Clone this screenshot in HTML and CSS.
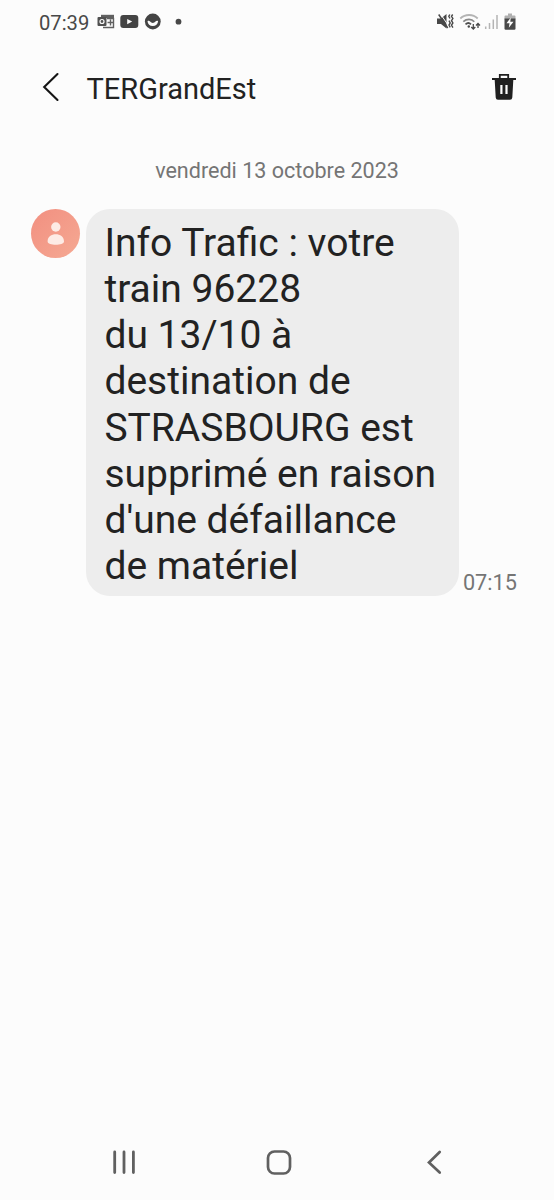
FILE: index.html
```
<!DOCTYPE html>
<html lang="fr">
<head>
    <meta charset="UTF-8">
    <meta name="viewport" content="width=device-width, initial-scale=1.0">
    <title>TERGrandEst</title>
    <link rel="stylesheet" href="styles.css">
</head>
<body>
    <div class="status-bar">
        <span class="clock">07:39</span>
        <svg class="status-left" width="86" height="20" viewBox="97 12 86 20">
            <path fill="#606060" d="M101 14.800h13v3.200h-13z"/>
            <path fill="none" stroke="#606060" stroke-width="1.400" d="M107 18.500h6.500v9H103M110.500 19.500v6M107.500 22.500h6"/>
            <rect x="97.500" y="17" width="9" height="9" rx="1" fill="#505050"/>
            <circle cx="102" cy="21.500" r="2" fill="none" stroke="#fcfcfc" stroke-width="1.200"/>
            <rect x="120.300" y="15" width="18" height="13" rx="3" fill="#444"/>
            <path fill="#fcfcfc" d="M127.200 18.900v5.400l5-2.700z"/>
            <circle cx="152.800" cy="21.500" r="7.900" fill="#444"/>
            <path fill="#fcfcfc" d="M147.500 21.200c.8-.8 2-.5 2.600.4c1.300 1.700 4.100 1.700 5.400 0c.6-.9 1.800-1.200 2.600-.4c-.3 3-2.300 4.900-5.300 4.900s-5-1.900-5.300-4.900z"/>
            <circle cx="178.500" cy="21.700" r="2.900" fill="#484848"/>
        </svg>
        <svg class="status-right" width="82" height="20" viewBox="436 12 82 20">
            <path fill="#484848" d="M437 18.500h4l5.500-4.500v14.500l-5.500-4.500h-4z"/>
            <path stroke="#fcfcfc" stroke-width="1" d="M440.500 14l8.500 12.500"/>
            <path stroke="#484848" stroke-width="1.500" d="M438.700 14.500l9 13.500"/>
            <path fill="none" stroke="#484848" stroke-width="1.400" d="M449.800 14.500l-1 1.800l1.200 2.200M452.700 14.500l-1.200 1.800l1.400 2.200l-1.400 2.200l1.400 2.200l-1.400 2.200l1.400 2.500M449 20.700l1.200 2.200l-1.200 2.200l1.200 2.200"/>
            <path fill="none" stroke="#b4b4b4" stroke-width="1.800" d="M460.300 18.500c5-4.700 12.700-4.700 17.400 0"/>
            <path fill="none" stroke="#888" stroke-width="1.700" d="M463.300 21.700c3.300-3 8.300-3 11 0"/>
            <path fill="none" stroke="#505050" stroke-width="1.700" d="M465.500 24.300c1.700-1.500 4-1.500 5.500 0"/>
            <circle cx="468.800" cy="26.500" r="1.200" fill="#484848"/>
            <path fill="none" stroke="#484848" stroke-width="1.300" d="M473.300 24v5M471.300 27l2 2l2-2M478 28V23.500M476 25.500l2-2l2 2"/>
            <path fill="none" stroke="#b4b4b4" stroke-width="1.500" d="M485.700 29v-2.500M489.500 29v-6M493.300 29v-9.500M497 29V15"/>
            <path fill="#b0b0b0" d="M508 13.500h4v2h2.500q1 0 1 1v3h-11v-3q0-1 1-1h2.500z"/>
            <path fill="#484848" d="M504.500 18.500h11v10q0 1.200-1.200 1.200h-8.600q-1.200 0-1.200-1.200z"/>
            <path fill="#fcfcfc" d="M510.800 17.500l-4.300 5.800h3l-.7 4.500l4.700-6h-3.200z"/>
        </svg>
    </div>

    <header class="top-bar">
        <svg width="18" height="30" viewBox="0 0 18 30">
            <path fill="none" stroke="#151515" stroke-width="2.100" stroke-linecap="round" d="M15.500 2L2.200 15l13.300 13"/>
        </svg>
        <h1>TERGrandEst</h1>
        <svg class="trash" width="26" height="28" viewBox="0 0 26 28">
            <path fill="none" stroke="#202020" stroke-width="1.800" d="M8.800 6V1.900h8.400V6"/>
            <path fill="#202020" d="M1 5h24v2H1zM3.700 7h18.600l-1 17.500q-.2 2.300-2.300 2.300h-12q-2.100 0-2.300-2.300z"/>
            <path fill="#fcfcfc" d="M9.300 12h2.200v9H9.300zM14.400 12h2.200v9h-2.200z"/>
        </svg>
    </header>

    <main>
        <p class="date">vendredi 13 octobre 2023</p>
        <div class="message">
            <div class="avatar">
                <svg width="18" height="24" viewBox="0 0 18 24">
                    <circle cx="8.800" cy="5" r="4.700" fill="#fdebe5"/>
                    <path fill="#fdebe5" d="M.6 19.500C.6 14.800 4.500 12.300 8.800 12.300s8.200 2.500 8.200 7.200c0 4.400-16.400 4.400-16.400 0z"/>
                </svg>
            </div>
            <div class="bubble">Info Trafic : votre<br>train 96228<br>du 13/10 à<br>destination de<br>STRASBOURG est<br>supprimé en raison<br>d'une défaillance<br>de matériel</div>
            <span class="time">07:15</span>
        </div>
    </main>

    <nav class="nav-bar">
        <svg width="26" height="28" viewBox="0 0 26 28">
            <path stroke="#606060" stroke-width="2.800" stroke-linecap="round" d="M3.700 4v20.500M13 4v20.500M22.400 4v20.500"/>
        </svg>
        <svg class="home" width="28" height="28" viewBox="0 0 28 28">
            <rect x="3" y="3.500" width="22" height="22" rx="6.500" fill="none" stroke="#606060" stroke-width="2.700"/>
        </svg>
        <svg width="18" height="28" viewBox="0 0 18 28">
            <path fill="none" stroke="#606060" stroke-width="2.700" stroke-linecap="round" d="M13.700 4L3 14.500l10.700 10"/>
        </svg>
    </nav>
</body>
</html>
```

FILE: styles.css
```
body {
    display: flex;
    flex-direction: column;
    height: 1200px;
    margin: 0;
    font-family: Roboto, sans-serif;
    color: #222;
    background-color: #fcfcfc;
}
svg {
    display: block;
    flex: none;
}
.status-bar {
    display: flex;
    align-items: center;
    height: 44px;
    padding: 0 36px 0 39px;
}
.clock {
    width: 58px;
    padding-top: 2px;
    font-size: 20.2px;
    color: #484848;
}
.status-right {
    margin-left: auto;
}
.top-bar {
    display: flex;
    align-items: center;
    height: 86px;
    padding: 0 37px 0 42px;
}
h1 {
    margin: 3px 0 0 26.5px;
    font-size: 29px;
    font-weight: 400;
}
.trash {
    margin-left: auto;
}
main {
    flex: 1;
}
.date {
    margin: 28px 0 0;
    font-size: 21.55px;
    line-height: 26px;
    text-align: center;
    color: #757575;
}
.message {
    display: flex;
    align-items: flex-start;
    margin: 25px 0 0 31px;
}
.avatar {
    display: flex;
    align-items: center;
    justify-content: center;
    width: 49px;
    height: 49px;
    border-radius: 50%;
    background: linear-gradient(135deg, #f28f80, #f5a993);
}
.bubble {
    box-sizing: border-box;
    width: 373px;
    height: 387px;
    margin-left: 6.4px;
    padding: 11px 18px;
    border-radius: 24px;
    font-size: 39px;
    line-height: 46.15px;
    white-space: nowrap;
    background-color: #ededed;
}
.time {
    align-self: flex-end;
    margin-left: 3.5px;
    font-size: 21.7px;
    line-height: 26px;
    color: #757575;
}
.nav-bar {
    display: flex;
    align-items: center;
    height: 76px;
    padding: 0 110px 0 111px;
}
.home {
    margin: 0 auto 0 128px;
}
```
